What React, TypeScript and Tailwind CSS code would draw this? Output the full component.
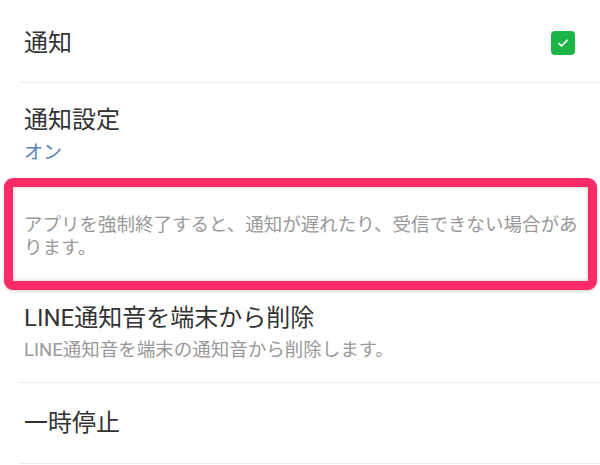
import React, { useState } from "react";

const font = { fontFamily: 'Roboto, "Noto Sans CJK JP", "Noto Sans", sans-serif' };

const Check = ({ on, onToggle }: { on: boolean; onToggle: () => void }) => (
  <button
    onClick={onToggle}
    className={`flex h-6 w-6 items-center justify-center rounded-[4px] ${
      on ? "bg-[#1db446]" : "border-2 border-[#bbbbbb] bg-white"
    }`}
  >
    {on && (
      <svg viewBox="0 0 24 24" className="h-[18px] w-[18px]" fill="none">
        <path
          d="M6.5 12.5l3.5 3.5L17.5 8.5"
          stroke="#ffffff"
          strokeWidth="2"
          strokeLinecap="round"
          strokeLinejoin="round"
        />
      </svg>
    )}
  </button>
);

const App = () => {
  const [notify, setNotify] = useState(true);

  return (
    <div className="h-[465px] w-[600px] overflow-hidden bg-white" style={font}>
      {/* 通知 */}
      <div className="ml-5 flex h-[83px] items-center justify-between border-b border-[#ececec] pl-1 pr-[25px] pt-[3px]">
        <span className="text-[24px] leading-[30px] text-[#333333]">通知</span>
        <Check on={notify} onToggle={() => setNotify((v) => !v)} />
      </div>

      {/* 通知設定 */}
      <div className="ml-5 h-[95px] pl-1 pt-[22px]">
        <div className="text-[24px] leading-[30px] text-[#333333]">通知設定</div>
        <div className="mt-[6px] text-[19px] leading-[24px] text-[#5682b8]">
          {notify ? "オン" : "オフ"}
        </div>
      </div>

      {/* highlighted note */}
      <div className="ml-[4px] mr-[3px] h-[112px] rounded-[9px] border-[9px] border-[#fc2b68] bg-white pl-[11px] pr-[3px] pt-[27px] shadow-[inset_0_0_4px_rgba(0,0,0,0.22),0_1px_3px_rgba(0,0,0,0.2)]">
        <p className="text-[18.5px] leading-[23px] text-[#999999]">
          アプリを強制終了すると、通知が遅れたり、受信できない場合があります。
        </p>
      </div>

      {/* LINE通知音を端末から削除 */}
      <div className="ml-5 border-b border-[#ececec] pb-[20px] pl-1 pt-[13px]">
        <div className="text-[24px] leading-[30px] text-[#333333]">
          LINE通知音を端末から削除
        </div>
        <div className="mt-[5px] text-[18.5px] leading-[24px] text-[#999999]">
          LINE通知音を端末の通知音から削除します。
        </div>
      </div>

      {/* 一時停止 */}
      <div className="ml-5 flex h-[81px] items-center border-b border-[#ececec] pl-1">
        <span className="text-[24px] leading-[30px] text-[#333333]">一時停止</span>
      </div>
    </div>
  );
};

export default App;
